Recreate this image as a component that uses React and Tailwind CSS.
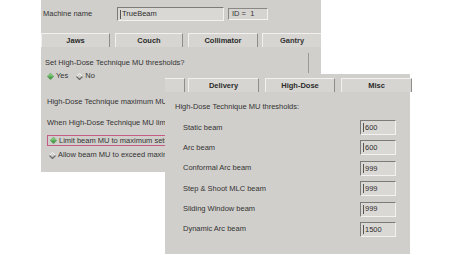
const font = { fontFamily: '"Liberation Sans", Arial, sans-serif' };

function Diamond({ on }) {
  return (
    <svg width="7" height="7" viewBox="0 0 7 7" className="shrink-0">
      {on ? (
        <>
          <polygon points="3.5,0 7,3.5 3.5,7 0,3.5" fill="#4f9a4c" />
          <polygon points="3.5,0 7,3.5 0,3.5" fill="#7cc377" />
        </>
      ) : (
        <>
          <polyline points="0.5,3.5 3.5,0.5 6.5,3.5" fill="none" stroke="#f4f4f2" strokeWidth="1" />
          <polyline points="0.5,3.5 3.5,6.5 6.5,3.5" fill="none" stroke="#6b6b6b" strokeWidth="1.2" />
        </>
      )}
    </svg>
  );
}

function Field({ value, w, h = "h-[15px]" }) {
  return (
    <div className={`${w} ${h} shrink-0 flex items-center gap-[1px] pl-[2px] bg-[#dad8d5] border-t border-l border-t-[#7d7b78] border-l-[#7d7b78] border-b border-r border-b-[#f3f2f0] border-r-[#f3f2f0]`}>
      <span className="w-[1px] h-[9px] bg-[#555]" />
      <span className="text-[7.5px] text-[#2e2e2e] leading-none">{value}</span>
    </div>
  );
}

function Tab({ label, w }) {
  return (
    <div className={`${w} h-[14px] shrink-0 flex items-center justify-center bg-[#d7d5d2] border-t border-l border-t-[#f2f1ef] border-l-[#f2f1ef] border-r border-r-[#8f8d8a] text-[7.5px] font-bold text-[#2a2a2a] leading-none`}>
      {label}
    </div>
  );
}

const rows = [
  ["Static beam", "600"],
  ["Arc beam", "600"],
  ["Conformal Arc beam", "999"],
  ["Step & Shoot MLC beam", "999"],
  ["Sliding Window beam", "999"],
  ["Dynamic Arc beam", "1500"],
];

export default function App() {
  return (
    <div className="relative w-[452px] h-[255px] bg-white overflow-hidden" style={font}>
      {/* back window */}
      <div className="absolute left-[41px] top-0 w-[280px] h-[172px] bg-[#d1cfcc] flex flex-col pt-[7px] text-[7.5px] text-[#333] leading-[10px]">
        <div className="flex items-center h-[14px]">
          <span className="w-[76px] pl-[2px]">Machine name</span>
          <Field value="TrueBeam" w="w-[107px]" h="h-[14px]" />
          <div className="ml-[4px] w-[40px] h-[12px] flex items-center pl-[3px] bg-[#d6d4d1] border-t border-l border-t-[#8a8885] border-l-[#8a8885] border-b border-r border-b-[#f3f2f0] border-r-[#f3f2f0]">
            ID = &nbsp;1
          </div>
        </div>
        <div className="flex mt-[12px] gap-[5px]">
          <Tab label="Jaws" w="w-[69px]" />
          <Tab label="Couch" w="w-[68px]" />
          <Tab label="Collimator" w="w-[70px]" />
          <div className="flex-1 -ml-[1px] h-[14px] flex items-center justify-center bg-[#d7d5d2] border-t border-l border-t-[#f2f1ef] border-l-[#f2f1ef] font-bold">Gantry</div>
        </div>
        <div className="relative flex-1 flex flex-col">
          <span className="absolute left-[267px] top-[6px] w-[1px] h-[20px] bg-[#9c9a97]" />
          <span className="mt-[11px] pl-[4px]">Set High-Dose Technique MU thresholds?</span>
          <div className="mt-[3px] pl-[6px] flex items-center gap-[2px]">
            <Diamond on />
            <span className="mr-[6px]">Yes</span>
            <Diamond />
            <span>No</span>
          </div>
          <span className="mt-[16px] pl-[6px] whitespace-nowrap">High-Dose Technique maximum MU</span>
          <span className="mt-[11px] pl-[6px] whitespace-nowrap">When High-Dose Technique MU lim</span>
          <div className="mt-[7px] ml-[6px] w-[150px] h-[11px] flex items-center gap-[2px] pl-[2px] border border-[#c45c86] whitespace-nowrap">
            <Diamond on />
            <span>Limit beam MU to maximum settir</span>
          </div>
          <div className="mt-[4px] pl-[8px] flex items-center gap-[2px] whitespace-nowrap">
            <Diamond />
            <span>Allow beam MU to exceed maxim</span>
          </div>
        </div>
      </div>

      {/* front window */}
      <div className="absolute left-[165px] top-[74px] w-[245px] h-[180px] bg-[#d1cfcc] flex flex-col pt-[4px] text-[7.5px] text-[#333] leading-[10px]">
        <div className="flex gap-[3px]">
          <div className="w-[20px] h-[14px] shrink-0 bg-[#d7d5d2] border-t border-t-[#f2f1ef] border-r border-r-[#8f8d8a]" />
          <Tab label="Delivery" w="w-[71px]" />
          <div className="w-[1px]" />
          <Tab label="High-Dose" w="w-[70px]" />
          <div className="w-[1px]" />
          <Tab label="Misc" w="w-[71px]" />
        </div>
        <span className="mt-[10px] pl-[10px]">High-Dose Technique MU thresholds:</span>
        <div className="mt-[8px] flex flex-col gap-[5.4px] pl-[18px] pr-[14px]">
          {rows.map(([label, val]) => (
            <div key={label} className="flex items-center justify-between h-[15px]">
              <span>{label}</span>
              <Field value={val} w="w-[36px]" />
            </div>
          ))}
        </div>
      </div>
    </div>
  );
}
